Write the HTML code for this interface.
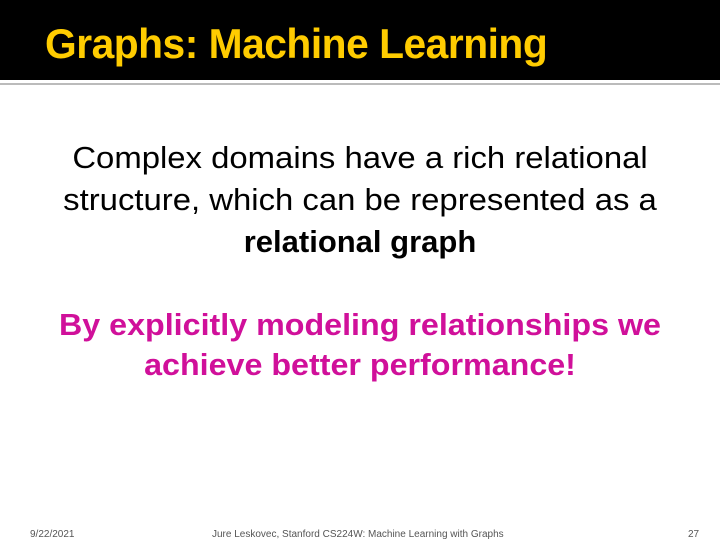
<!DOCTYPE html>
<html><head><style>
body{margin:0;width:720px;height:540px;background:#fff;position:relative;overflow:hidden;font-family:"Liberation Sans",sans-serif}
.hdr{position:absolute;left:0;top:0;width:720px;height:80px;background:#000}
.title{position:absolute;left:45px;top:20px;color:#ffcc00;font-weight:bold;font-size:42px;white-space:nowrap;transform:scaleX(0.97);transform-origin:left top;letter-spacing:-0.5px}
.line{position:absolute;left:0;top:83px;width:720px;height:2px;background:#bbb}
.t{position:absolute;left:0;width:720px;text-align:center;white-space:nowrap}
.b{font-size:31px;color:#000}
.p{font-size:31px;color:#d0109a;font-weight:bold}
.f{position:absolute;top:529px;font-size:10px;color:#555}
</style></head><body>
<div class="hdr"></div>
<div class="title">Graphs: Machine Learning</div>
<div class="line"></div>
<div class="t b" style="top:140px;transform:scaleX(1.06)">Complex domains have a rich relational</div>
<div class="t b" style="top:182px;transform:scaleX(1.06)">structure, which can be represented as a</div>
<div class="t b" style="top:224px;transform:scaleX(1.0)"><b>relational graph</b></div>
<div class="t p" style="top:307px;transform:scaleX(1.04)">By explicitly modeling relationships we</div>
<div class="t p" style="top:347px;transform:scaleX(1.04)">achieve better performance!</div>
<div class="f" style="left:30px">9/22/2021</div>
<div class="f" style="left:212px">Jure Leskovec, Stanford CS224W: Machine Learning with Graphs</div>
<div class="f" style="left:688px">27</div>
</body></html>
